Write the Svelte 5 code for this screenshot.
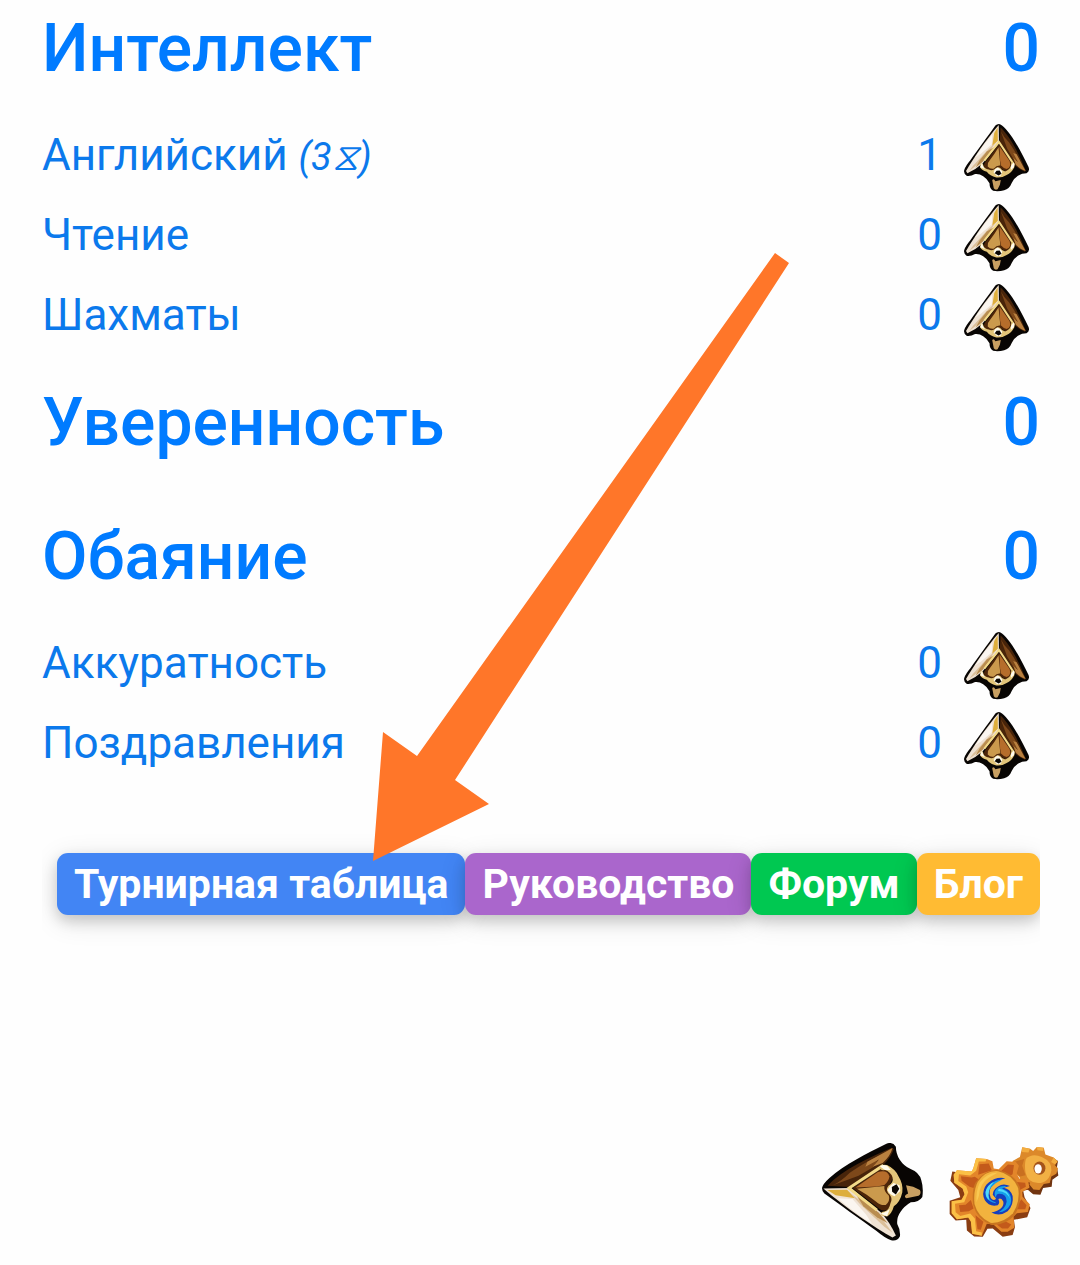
<script>
  const groups = [
    {
      name: 'Интеллект',
      total: 0,
      skills: [
        { name: 'Английский', note: '(3⧖)', value: 1 },
        { name: 'Чтение', value: 0 },
        { name: 'Шахматы', value: 0 }
      ]
    },
    { name: 'Уверенность', total: 0, skills: [] },
    {
      name: 'Обаяние',
      total: 0,
      skills: [
        { name: 'Аккуратность', value: 0 },
        { name: 'Поздравления', value: 0 }
      ]
    }
  ];
  const links = [
    { label: 'Турнирная таблица', kind: 'blue' },
    { label: 'Руководство', kind: 'purple' },
    { label: 'Форум', kind: 'green' },
    { label: 'Блог', kind: 'amber' }
  ];
</script>

{#snippet arrowhead()}
  <path fill="#080503" d="M38 160Q40 148 60 130C105 90 170 58 228 29Q246 22 256 38Q256 58 267 76Q280 96 298 103Q326 114 331 137Q338 160 334 186Q324 202 300 202Q280 214 270 230Q258 246 260 266Q270 284 268 302Q260 318 242 314Q224 308 198 286C150 252 90 208 45 176Q38 170 38 160Z" />
  <path fill="#47240a" d="M54 153C100 104 178 70 244 41L250 45Q240 72 222 88L204 100L120 157Z" />
  <path fill="#7d481a" d="M120 115Q170 80 210 64L190 98L146 124L70 152Q95 140 120 115Z" />
  <path fill="#b9803f" d="M172 82L246 42Q240 66 217 86L188 97L206 76L166 97Z" />
  <path fill="#efe2d3" d="M42 161L122 160L212 232Q238 260 256 300L246 306C190 274 110 220 42 161Z" />
  <path fill="#ddae3c" d="M54 166L112 165L136 190L78 181Z" />
  <path fill="#dcc09a" d="M120 174L205 238L246 292L222 274L150 207Z" />
  <path fill="#b98d50" d="M140 182L205 232L232 264L200 246L160 214Z" />
  <path fill="#fbf6f0" d="M84 190L128 192L168 238L186 266Q130 230 84 190Z" />
  <path fill="#4c2509" d="M128 160L208 105Q240 100 248 128Q240 148 232 158Q232 170 244 180Q250 206 232 224Q216 230 206 220Z" />
  <path fill="none" stroke="#f3da88" stroke-width="9" d="M219 93L118 160L200 225" />
  <path fill="#b66d2b" d="M137 158L202 113Q231 104 237 126Q235 140 222 151L200 155Z" />
  <path fill="#cb9a4d" d="M141 162L222 154Q220 171 235 182Q240 198 226 210Q210 212 198 200L170 180Z" />
  <path fill="#e3c579" d="M207 98Q212 88 230 92Q256 105 264 126Q278 148 275 172Q269 200 250 214Q244 236 230 244L212 241Q210 229 222 229Q236 226 240 205Q247 192 238 180Q223 166 234 153Q250 144 246 128Q240 112 224 107Q208 109 207 98Z" />
  <path fill="#fffbed" d="M209 96Q218 88 231 95L241 107L224 107ZM211 236L228 229L238 222L230 243ZM231 166Q235 155 249 145L267 152L269 169L252 184Q237 181 231 166Z" />
  <path fill="#080503" d="M244 157L258 149L266 162L256 179L245 171Z" />
  <path fill="#c9a062" d="M286 152L307 156L327 166Q332 177 323 183L287 190Q276 184 292 176Z" />
{/snippet}

<svelte:head><title>Навыки</title></svelte:head>

<main>
  {#each groups as group}
    <section>
      <h2><a href="#group">{group.name}</a><span>{group.total}</span></h2>
      {#if group.skills.length}
        <ul>
          {#each group.skills as skill}
            <li>
              <a href="#skill">{skill.name}{#if skill.note}{' '}<i>{skill.note}</i>{/if}</a>
              <span class="value">{skill.value}</span>
              <button class="up" aria-label="Повысить: {skill.name}">
                <svg viewBox="0 0 288 297"><g transform="matrix(0 1 -1 0 315 -38)">{@render arrowhead()}</g></svg>
              </button>
            </li>
          {/each}
        </ul>
      {/if}
    </section>
  {/each}

  <nav>
    {#each links as link}
      <a class={link.kind} href="#page">{link.label}</a>
    {/each}
  </nav>

  <footer>
    <button class="back" aria-label="Назад">
      <svg viewBox="38 27 298 290">{@render arrowhead()}</svg>
    </button>
    <button class="settings" aria-label="Настройки">
      <svg viewBox="26 32 332 282">
        <path fill="#713410" d="M246 130L243 150L280 181L302 182L310 162L336 158L338 137L356 124L352 98L355 80L342 72Z" />
        <path fill="#dc892a" d="M218 80L240 68L247 39L271 43L280 50L291 38L312 40L317 61L342 70L353 82L346 93L355 103L350 119L335 127L330 147L312 150L299 168L281 166L270 153L248 151L238 128L216 112Z" />
        <path fill="#f2b044" d="M258 74Q277 55 306 68Q337 82 335 108Q329 146 295 147Q263 146 257 115Q253 92 258 74Z" />
        <path fill="#c97020" d="M222 83L253 74L247 95L257 123L240 127L222 110Z" />
        <path fill="#f3ad3f" d="M247 39L270 43L266 55L246 53ZM291 38L311 40L310 50L293 48ZM342 70L354 82L346 90L334 83Z" />
        <ellipse cx="299" cy="102" rx="18" ry="20" fill="#a5541a" />
        <ellipse cx="295" cy="104" rx="11" ry="14" fill="#fff" />

        <path fill="#8a3d12" d="M36 112L30 140L54 168L60 190L28 200L28 240L46 260L78 258L80 290L102 308L128 309L142 285L158 284L188 309L218 304L225 280L222 258L262 250L272 222L254 190L250 170L268 166L270 145Z" />
        <path fill="#e3862a" d="M50 108L94 112L99 104L108 72L140 74L157 81L161 103L176 105L200 81L228 83L237 95L230 119L239 134L264 137L269 160L247 174L248 188L270 211L264 234L231 238L221 248L223 282L203 294L184 294L160 272L140 270L125 306L96 300L92 263L84 251L50 256L34 238L34 202L64 197L73 181L67 163L42 146L40 122Z" />
        <path fill="#fbc046" d="M50 108L94 112L99 104L108 72L140 74L136 82L116 82L108 110L90 124L56 120L54 141L78 157L84 175L72 205L44 209L46 235L60 246L90 239L104 254L108 292L125 296L125 306L96 300L92 263L84 251L50 256L34 238L34 202L64 197L73 181L67 163L42 146L40 122Z" />
        <path fill="#c35a1b" d="M62 126L94 130L104 128L116 136L100 162L88 158L64 140ZM118 90L146 88L155 108L132 116L114 122ZM182 112L204 91L222 92L218 120L206 128ZM230 144L256 146L258 158L240 168ZM56 214L76 212L92 198L100 224L86 232L60 234ZM106 244L130 264L122 288L112 286ZM170 272L196 262L214 272L204 284L186 284ZM226 226L244 196L260 214L256 226Z" />
        <path fill="#c97520" d="M105 147Q133 105 177 108Q222 117 240 159Q247 205 224 244Q197 275 153 273Q111 257 99 213Q94 172 105 147Z" />
        <path fill="#f2b33e" d="M113 143Q137 108 174 111Q218 120 235 163Q241 204 219 238Q190 269 151 267Q113 249 103 210Q99 170 113 143Z" />
        <path fill="#f9c852" d="M119 145Q142 115 172 116L146 131Q118 149 116 187L109 205Q107 170 119 145Z" />
        <path fill="#153fbd" d="M196 132Q166 127 146 145Q131 155 129 180Q130 200 146 211Q158 218 173 214Q181 207 175 195Q184 190 190 203Q194 225 154 236Q179 249 203 232Q222 213 218 186Q211 164 191 161L210 156Q190 146 174 157Q158 167 158 182L168 194Q161 203 152 192Q142 169 159 152Q171 138 196 132Z" />
        <path fill="#159fea" d="M186 136Q164 137 149 153Q134 168 137 187Q144 204 167 208Q169 204 162 203Q148 200 144 184Q143 157 186 136ZM200 156Q176 154 167 168Q160 181 168 192Q167 179 178 179Q200 179 200 203Q197 222 176 235Q200 234 212 210Q220 174 186 164Z" />
        <path fill="#50dafa" d="M162 143Q141 152 136 174Q137 191 147 198Q140 166 162 143ZM176 164Q206 167 210 195Q202 173 174 171Z" />
      </svg>
    </button>
  </footer>

  <svg class="pointer" viewBox="373 253 416 608" aria-hidden="true">
    <path fill="#ff7629" d="M373 861L383 732L417 756L775 253L789 263L455 780L489 804Z" />
  </svg>
</main>

<style>
  :global(body) {
    margin: 0;
    background: #fefefe;
  }
  main {
    position: relative;
    padding: 0 40px 0 42px;
    font-family: Roboto, 'Liberation Sans', sans-serif;
    color: #007bff;
  }
  a {
    color: inherit;
    text-decoration: none;
  }
  button {
    padding: 0;
    border: 0;
    background: none;
    cursor: pointer;
  }
  svg {
    display: block;
    width: 100%;
  }
  h2 {
    display: flex;
    justify-content: space-between;
    margin: 0;
    padding: 28px 0 30px;
    font-size: 66px;
    line-height: 76px;
    font-weight: 500;
  }
  section:first-child h2 {
    padding-top: 11px;
  }
  ul {
    margin: 0;
    padding: 0;
    list-style: none;
  }
  li {
    display: flex;
    align-items: center;
    height: 80px;
    padding-right: 11px;
    font-size: 44px;
    line-height: 52px;
    color: #0b79ec;
  }
  li a,
  .value {
    padding-bottom: 4px;
  }
  li a {
    flex: 1;
  }
  i {
    font-family: Roboto, 'DejaVu Sans', sans-serif;
    font-size: 38px;
    line-height: 38px;
  }
  .value {
    margin-right: 22px;
  }
  .up {
    width: 65px;
    padding-top: 2px;
  }
  nav {
    display: flex;
    justify-content: flex-end;
    overflow: hidden;
    margin-top: 28px;
    padding: 40px 0;
  }
  nav a {
    padding: 6px 17px;
    border-radius: 11px;
    font-size: 41px;
    line-height: 50px;
    font-weight: 700;
    white-space: nowrap;
    color: #fff;
    box-shadow: 0 6px 14px rgba(0, 0, 0, 0.16), 0 6px 28px rgba(0, 0, 0, 0.12);
  }
  .blue {
    background: #4285f4;
  }
  .purple {
    background: #aa66cc;
  }
  .green {
    background: #00c851;
  }
  .amber {
    background: #ffbb33;
  }
  footer {
    display: flex;
    justify-content: flex-end;
    align-items: center;
    gap: 26px;
    margin: 188px -19px 0 0;
    padding-bottom: 24px;
  }
  .back {
    width: 101px;
  }
  .settings {
    width: 110px;
  }
  .pointer {
    position: absolute;
    left: 373px;
    top: 253px;
    width: 416px;
    pointer-events: none;
  }
</style>
